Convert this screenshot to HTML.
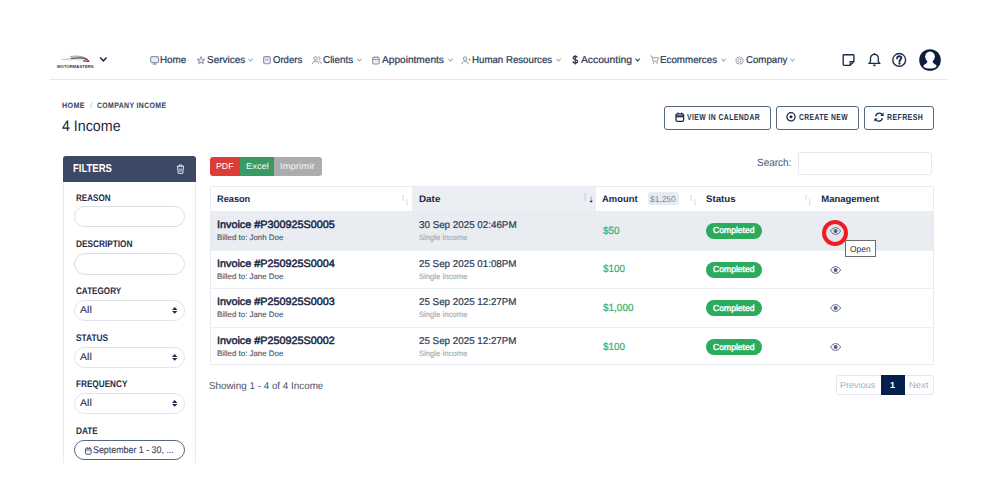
<!DOCTYPE html>
<html><head><meta charset="utf-8"><style>
html,body{margin:0;padding:0;background:#fff;}
body{width:1000px;height:500px;position:relative;overflow:hidden;font-family:"Liberation Sans",sans-serif;}
.t{position:absolute;white-space:nowrap;line-height:1;transform-origin:0 0;text-rendering:geometricPrecision;}
.r{position:absolute;}
svg.r{overflow:visible;}
</style></head><body>
<div class="r" style="left:50px;top:79px;width:898px;height:1px;background:#e6e9f0;"></div>
<svg class="r" style="left:56px;top:53px;width:40px;height:17px" viewBox="0 0 40 17">
<path d="M14.3 3.6 C17 3 22 2.9 26 3.8 C28.5 4.5 30.5 5.6 31.8 6.4" fill="none" stroke="#6a6a6a" stroke-width="0.7"/>
<path d="M5.9 6.4 C12 5.9 18 5.2 24 5.1 C27 5.1 30 6 31.8 6.9" fill="none" stroke="#9a9a9a" stroke-width="0.55"/>
<path d="M7.5 6.9 C15 6.6 24 6.7 31.5 7.4" fill="none" stroke="#b0b0b0" stroke-width="0.5"/>
<path d="M15 5.4 C19 4.9 24 4.8 27.5 5.2 C29.5 5.6 31.5 6.6 32.8 7.7" fill="none" stroke="#262626" stroke-width="1.0"/>
<path d="M27 7.3 C29.5 7.1 32 7.5 33.9 8.2 L33.2 8.9 C31 9 28.5 8.7 27 8.4 Z" fill="#e8282c"/>
<text x="1" y="15.1" font-family="Liberation Sans" font-weight="bold" font-size="4.4" fill="#3a3a3a" textLength="36.7" lengthAdjust="spacingAndGlyphs">MOTORMASTERS</text>
</svg>
<svg class="r" style="left:99.3px;top:56px;width:9px;height:7px" viewBox="0 0 9 7"><path d="M1.2 1.5 L4.4 4.8 L7.6 1.5" fill="none" stroke="#1c2a4a" stroke-width="1.5"/></svg>
<svg class="r" style="left:150.2px;top:56px;width:9.5px;height:9px" viewBox="0 0 9.5 9"><rect x="0.65" y="0.65" width="7.9" height="5.9" rx="1.2" fill="#e8ebf1" stroke="#8d97ab" stroke-width="1.2"/><path d="M2.8 8.1 H6.4 M4.6 6.6 V8.1" stroke="#8d97ab" stroke-width="1.2"/></svg>
<div class="t" style="left:160.28px;top:55.92px;font-size:10.0px;transform:scaleX(0.9781);-webkit-text-stroke:0.22px #2c3a57;color:#2c3a57;">Home</div>
<svg class="r" style="left:196.8px;top:55.8px;width:8px;height:9px" viewBox="0 0 8 9"><path d="M4 0.7 L5.1 3.1 L7.6 3.3 L5.7 5 L6.3 7.6 L4 6.2 L1.7 7.6 L2.3 5 L0.4 3.3 L2.9 3.1Z" fill="#e8ebf1" stroke="#8d97ab" stroke-width="1.05" stroke-linejoin="round"/></svg>
<div class="t" style="left:206.71px;top:55.64px;font-size:10.0px;transform:scaleX(0.9948);-webkit-text-stroke:0.22px #2c3a57;color:#2c3a57;">Services</div>
<svg class="r" style="left:248.1px;top:58.4px;width:5.5px;height:4.5px" viewBox="0 0 5.5 4.5"><path d="M0.5 0.7 L2.6 3.2 L4.7 0.7" fill="none" stroke="#a9b0bf" stroke-width="1.05"/></svg>
<svg class="r" style="left:263.1px;top:55.8px;width:8px;height:9px" viewBox="0 0 8 9"><rect x="0.6" y="0.6" width="6.7" height="7.1" rx="1.4" fill="#e8ebf1" stroke="#8d97ab" stroke-width="1.15"/><path d="M2.4 3.1 Q3.95 4.9 5.5 3.1" fill="none" stroke="#8d97ab" stroke-width="1"/></svg>
<div class="t" style="left:273.11px;top:55.67px;font-size:10.0px;transform:scaleX(0.9540);-webkit-text-stroke:0.22px #2c3a57;color:#2c3a57;">Orders</div>
<svg class="r" style="left:312px;top:55.9px;width:10px;height:8.5px" viewBox="0 0 10 8.5"><circle cx="3.6" cy="2.4" r="1.75" fill="#eef0f5" stroke="#8d97ab" stroke-width="1"/><path d="M6.2 0.8 A1.65 1.65 0 0 1 6.4 4.1" fill="none" stroke="#8d97ab" stroke-width="1"/><path d="M0.6 7.9 V7.3 C0.6 5.9 1.7 5.3 3 5.3 H4.2 C5.5 5.3 6.6 5.9 6.6 7.3 V7.9" fill="none" stroke="#8d97ab" stroke-width="1"/><path d="M7.3 5.4 C8.5 5.6 9.2 6.3 9.2 7.4 V7.9" fill="none" stroke="#8d97ab" stroke-width="1"/></svg>
<div class="t" style="left:323.23px;top:55.65px;font-size:10.0px;transform:scaleX(0.9881);-webkit-text-stroke:0.22px #2c3a57;color:#2c3a57;">Clients</div>
<svg class="r" style="left:356.6px;top:58.4px;width:5.5px;height:4.5px" viewBox="0 0 5.5 4.5"><path d="M0.5 0.7 L2.6 3.2 L4.7 0.7" fill="none" stroke="#a9b0bf" stroke-width="1.05"/></svg>
<svg class="r" style="left:371.8px;top:55.6px;width:8.5px;height:9px" viewBox="0 0 8.5 9"><rect x="0.6" y="1.3" width="6.6" height="6.6" rx="1.2" fill="#eef0f5" stroke="#8d97ab" stroke-width="1.05"/><path d="M0.6 3.6 H7.2 M2.3 0.2 V2.2 M5.5 0.2 V2.2" stroke="#8d97ab" stroke-width="1"/></svg>
<div class="t" style="left:381.63px;top:56.03px;font-size:10.0px;transform:scaleX(1.0125);-webkit-text-stroke:0.22px #2c3a57;color:#2c3a57;">Appointments</div>
<svg class="r" style="left:447.90000000000003px;top:58.4px;width:5.5px;height:4.5px" viewBox="0 0 5.5 4.5"><path d="M0.5 0.7 L2.6 3.2 L4.7 0.7" fill="none" stroke="#a9b0bf" stroke-width="1.05"/></svg>
<svg class="r" style="left:461px;top:55.5px;width:10px;height:9px" viewBox="0 0 10 9"><circle cx="4.1" cy="2.6" r="1.85" fill="#eef0f5" stroke="#8d97ab" stroke-width="1"/><path d="M1.1 8.3 V7.5 C1.1 6.2 2.1 5.6 3.3 5.6 H4.9 C6.1 5.6 7.1 6.2 7.1 7.5 V8.3" fill="none" stroke="#8d97ab" stroke-width="1"/><path d="M7.5 3.7 H9.7 M8.6 2.6 V4.8" stroke="#8d97ab" stroke-width="0.9"/></svg>
<div class="t" style="left:471.60px;top:55.76px;font-size:10.0px;transform:scaleX(0.9681);-webkit-text-stroke:0.22px #2c3a57;color:#2c3a57;">Human Resources</div>
<svg class="r" style="left:556.3000000000001px;top:58.4px;width:5.5px;height:4.5px" viewBox="0 0 5.5 4.5"><path d="M0.5 0.7 L2.6 3.2 L4.7 0.7" fill="none" stroke="#a9b0bf" stroke-width="1.05"/></svg>
<svg class="r" style="left:571.6px;top:55.1px;width:7px;height:10px" viewBox="0 0 7 10"><path d="M5.4 2.5 C5.1 1.7 4.3 1.3 3.3 1.3 C2.1 1.3 1.2 1.9 1.2 2.9 C1.2 4.9 5.6 4.4 5.6 6.3 C5.6 7.4 4.6 8 3.3 8 C2.1 8 1.1 7.5 0.9 6.5" fill="none" stroke="#2c3a57" stroke-width="1.4"/><path d="M3.3 0.4 V9.4" stroke="#2c3a57" stroke-width="1.2"/></svg>
<div class="t" style="left:580.90px;top:55.58px;font-size:10.0px;transform:scaleX(1.0279);-webkit-text-stroke:0.22px #2c3a57;color:#2c3a57;">Accounting</div>
<svg class="r" style="left:634.9px;top:58.4px;width:5.5px;height:4.5px" viewBox="0 0 5.5 4.5"><path d="M0.5 0.7 L2.6 3.2 L4.7 0.7" fill="none" stroke="#34425f" stroke-width="1.05"/></svg>
<svg class="r" style="left:649.6px;top:55px;width:9px;height:9.5px" viewBox="0 0 9 9.5"><path d="M0.3 1 H1.8 L3 6.2 H7.6 L8.3 2.6 H2.3" fill="none" stroke="#8d97ab" stroke-width="0.9" stroke-linejoin="round"/><circle cx="3.5" cy="8" r="0.8" fill="#8d97ab"/><circle cx="7" cy="8" r="0.8" fill="#8d97ab"/></svg>
<div class="t" style="left:660.45px;top:55.73px;font-size:10.0px;transform:scaleX(0.9778);-webkit-text-stroke:0.22px #2c3a57;color:#2c3a57;">Ecommerces</div>
<svg class="r" style="left:720.6px;top:58.4px;width:5.5px;height:4.5px" viewBox="0 0 5.5 4.5"><path d="M0.5 0.7 L2.6 3.2 L4.7 0.7" fill="none" stroke="#a9b0bf" stroke-width="1.05"/></svg>
<svg class="r" style="left:735px;top:55.5px;width:9px;height:9px" viewBox="0 0 9 9"><circle cx="4.5" cy="4.5" r="1.6" fill="none" stroke="#8d97ab" stroke-width="0.9"/><path d="M4.5 0.6 L5.4 1.6 L6.8 1.3 L7 2.7 L8.3 3.4 L7.6 4.6 L8.3 5.8 L7 6.4 L6.8 7.8 L5.4 7.4 L4.5 8.5 L3.6 7.4 L2.2 7.8 L2 6.4 L0.7 5.8 L1.4 4.6 L0.7 3.4 L2 2.7 L2.2 1.3 L3.6 1.6Z" fill="none" stroke="#8d97ab" stroke-width="0.9" stroke-linejoin="round"/></svg>
<div class="t" style="left:745.95px;top:56.06px;font-size:10.0px;transform:scaleX(0.9659);-webkit-text-stroke:0.22px #2c3a57;color:#2c3a57;">Company</div>
<svg class="r" style="left:790.3000000000001px;top:58.4px;width:5.5px;height:4.5px" viewBox="0 0 5.5 4.5"><path d="M0.5 0.7 L2.6 3.2 L4.7 0.7" fill="none" stroke="#a9b0bf" stroke-width="1.05"/></svg>
<svg class="r" style="left:842.2px;top:53.8px;width:13px;height:12.5px" viewBox="0 0 13 12.5"><path d="M2 0.7 H11.1 Q11.9 0.7 11.9 1.5 V7.4 L7.8 11.4 H2 Q1.2 11.4 1.2 10.6 V1.5 Q1.2 0.7 2 0.7Z" fill="none" stroke="#1d2c4c" stroke-width="1.35" stroke-linejoin="round"/><path d="M11.9 7.6 H8.2 V11.3" fill="none" stroke="#1d2c4c" stroke-width="1.2"/></svg>
<svg class="r" style="left:868.2px;top:52.9px;width:13px;height:14px" viewBox="0 0 13 14"><path d="M6.4 1.3 C4 1.3 2.5 3.2 2.5 5.6 V8.6 L0.9 10.4 H11.9 L10.3 8.6 V5.6 C10.3 3.2 8.8 1.3 6.4 1.3Z" fill="none" stroke="#1d2c4c" stroke-width="1.3" stroke-linejoin="round"/><path d="M6.4 0 V1.4" stroke="#1d2c4c" stroke-width="1.4"/><path d="M5.2 12 Q6.4 13.8 7.6 12Z" fill="#1d2c4c" stroke="#1d2c4c" stroke-width="0.8"/></svg>
<svg class="r" style="left:891.8px;top:52.8px;width:14.4px;height:14px" viewBox="0 0 14.4 14"><circle cx="7.2" cy="6.9" r="6.4" fill="none" stroke="#1d2c4c" stroke-width="1.4"/><path d="M5.1 5.4 C5.1 4 6.1 3.3 7.2 3.3 C8.4 3.3 9.3 4 9.3 5.1 C9.3 6.4 7.5 6.6 7.5 8.4" fill="none" stroke="#1d2c4c" stroke-width="1.9" stroke-linecap="round"/><circle cx="7.5" cy="10.5" r="1.15" fill="#1d2c4c"/></svg>
<svg class="r" style="left:919.2px;top:48.9px;width:22px;height:22px" viewBox="0 0 22 22"><defs><clipPath id="avc"><circle cx="11" cy="11" r="10.8"/></clipPath></defs><circle cx="11" cy="11" r="10.8" fill="#0d1d3b"/><g clip-path="url(#avc)" fill="#fff"><ellipse cx="11" cy="7.6" rx="4.9" ry="5.2"/><path d="M8.3 11.5 C8.6 13.6 7.4 14.6 5.6 15.6 C4.4 16.2 4.2 17.3 4.8 18 C6.3 19.3 8.6 19.6 11 19.6 C13.4 19.6 15.7 19.3 17.2 18 C17.8 17.3 17.6 16.2 16.4 15.6 C14.6 14.6 13.4 13.6 13.7 11.5Z"/></g></svg>
<div class="t" style="left:61.52px;top:102.31px;font-size:7.9px;font-weight:bold;transform:scaleX(0.9041);letter-spacing:0.4px;color:#34415c;">HOME</div>
<div class="t" style="left:90.01px;top:100.97px;font-size:8.3px;transform:scaleX(1.0757);color:#b9c0cd;">/</div>
<div class="t" style="left:97.13px;top:102.31px;font-size:7.9px;font-weight:bold;transform:scaleX(0.8796);letter-spacing:0.4px;color:#34415c;">COMPANY INCOME</div>
<div class="t" style="left:62.23px;top:118.91px;font-size:15.2px;transform:scaleX(0.9372);color:#1a2844;">4 Income</div>
<div class="r" style="left:663.8px;top:106px;width:106.8px;height:23.5px;box-sizing:border-box;border:1.3px solid #56667f;border-radius:3px;background:#fff;"></div>
<svg class="r" style="left:674.5px;top:112.3px;width:10px;height:10px" viewBox="0 0 10 10"><rect x="1" y="1.8" width="7.6" height="7.5" rx="1.3" fill="none" stroke="#1d2c4c" stroke-width="1.3"/><path d="M1 4.3 H8.6" stroke="#1d2c4c" stroke-width="2"/><path d="M3 0.4 V2.6 M6.6 0.4 V2.6" stroke="#1d2c4c" stroke-width="1.2"/></svg>
<div class="t" style="left:686.92px;top:112.72px;font-size:8.6px;font-weight:bold;transform:scaleX(0.7922);letter-spacing:0.55px;color:#24324f;">VIEW IN CALENDAR</div>
<div class="r" style="left:775.6px;top:106px;width:83px;height:23.5px;box-sizing:border-box;border:1.3px solid #56667f;border-radius:3px;background:#fff;"></div>
<svg class="r" style="left:786.2px;top:112.3px;width:10px;height:10px" viewBox="0 0 10 10"><circle cx="5" cy="4.8" r="4.1" fill="none" stroke="#1d2c4c" stroke-width="1.3"/><circle cx="5" cy="4.8" r="1.5" fill="#1d2c4c"/></svg>
<div class="t" style="left:799.07px;top:112.72px;font-size:8.6px;font-weight:bold;transform:scaleX(0.7816);letter-spacing:0.55px;color:#24324f;">CREATE NEW</div>
<div class="r" style="left:863.8px;top:106px;width:70px;height:23.5px;box-sizing:border-box;border:1.3px solid #56667f;border-radius:3px;background:#fff;"></div>
<svg class="r" style="left:874.2px;top:112.3px;width:10px;height:10px" viewBox="0 0 10 10"><path d="M1.6 4.2 C2.2 2.2 3.8 1.2 5.4 1.2 C7 1.2 8.2 2 8.8 3.2 M8.4 6.2 C7.8 8.2 6.4 9.2 4.6 9.2 C3 9.2 1.8 8.4 1.2 7.2" fill="none" stroke="#1d2c4c" stroke-width="1.3"/><path d="M9.6 0.6 V4 H6.2 Z M0.4 9.8 V6.4 H3.8 Z" fill="#1d2c4c"/></svg>
<div class="t" style="left:887.06px;top:112.72px;font-size:8.6px;font-weight:bold;transform:scaleX(0.8045);letter-spacing:0.55px;color:#24324f;">REFRESH</div>
<div class="r" style="left:63px;top:156px;width:133px;height:320px;box-sizing:border-box;border:1px solid #e7eaf0;border-radius:3px;background:#fff;"></div>
<div class="r" style="left:63px;top:156px;width:133px;height:26px;background:#3c4966;border-radius:3px 3px 0 0;"></div>
<div class="t" style="left:72.55px;top:164.22px;font-size:11.5px;font-weight:bold;transform:scaleX(0.8267);color:#fff;">FILTERS</div>
<svg class="r" style="left:176px;top:164.3px;width:9px;height:10px" viewBox="0 0 9 10"><path d="M0.8 2.3 H8.2 M3 2.3 V1 H6 V2.3" fill="none" stroke="#e4e7ee" stroke-width="1"/><path d="M1.6 2.8 L2.2 9.3 H6.8 L7.4 2.8" fill="none" stroke="#e4e7ee" stroke-width="1"/><path d="M3.8 4.5 V7.6 M5.2 4.5 V7.6" stroke="#e4e7ee" stroke-width="0.9"/></svg>
<div class="t" style="left:76.46px;top:193.87px;font-size:9.6px;font-weight:bold;transform:scaleX(0.8414);color:#1f2c47;">REASON</div>
<div class="r" style="left:74px;top:205.8px;width:111px;height:21.5px;box-sizing:border-box;border:1px solid #d9dfe8;border-radius:11px;background:#fff;"></div>
<div class="t" style="left:76.44px;top:239.87px;font-size:9.6px;font-weight:bold;transform:scaleX(0.8618);color:#1f2c47;">DESCRIPTION</div>
<div class="r" style="left:74px;top:253px;width:111px;height:21.5px;box-sizing:border-box;border:1px solid #d9dfe8;border-radius:11px;background:#fff;"></div>
<div class="t" style="left:75.70px;top:286.87px;font-size:9.6px;font-weight:bold;transform:scaleX(0.8465);color:#1f2c47;">CATEGORY</div>
<div class="r" style="left:74px;top:300.2px;width:111px;height:21.3px;box-sizing:border-box;border:1px solid #dfe4ec;border-radius:11px;background:#fff;"></div>
<div class="t" style="left:80.29px;top:305.56px;font-size:9.8px;transform:scaleX(1.0801);-webkit-text-stroke:0.15px #2f3b52;color:#2f3b52;">All</div>
<svg class="r" style="left:172px;top:307.09999999999997px;width:6px;height:8px" viewBox="0 0 6 8"><path d="M0 3 L2.7 0 L5.4 3Z M0 4.1 L2.7 6.8 L5.4 4.1Z" fill="#1f2c47"/></svg>
<div class="t" style="left:76.21px;top:333.87px;font-size:9.6px;font-weight:bold;transform:scaleX(0.8712);color:#1f2c47;">STATUS</div>
<div class="r" style="left:74px;top:346.8px;width:111px;height:21.3px;box-sizing:border-box;border:1px solid #dfe4ec;border-radius:11px;background:#fff;"></div>
<div class="t" style="left:80.29px;top:352.94px;font-size:9.8px;transform:scaleX(1.0801);-webkit-text-stroke:0.15px #2f3b52;color:#2f3b52;">All</div>
<svg class="r" style="left:172px;top:353.7px;width:6px;height:8px" viewBox="0 0 6 8"><path d="M0 3 L2.7 0 L5.4 3Z M0 4.1 L2.7 6.8 L5.4 4.1Z" fill="#1f2c47"/></svg>
<div class="t" style="left:76.45px;top:380.30px;font-size:9.6px;font-weight:bold;transform:scaleX(0.8531);color:#1f2c47;">FREQUENCY</div>
<div class="r" style="left:74px;top:393.2px;width:111px;height:21.3px;box-sizing:border-box;border:1px solid #dfe4ec;border-radius:11px;background:#fff;"></div>
<div class="t" style="left:80.29px;top:398.56px;font-size:9.8px;transform:scaleX(1.0801);-webkit-text-stroke:0.15px #2f3b52;color:#2f3b52;">All</div>
<svg class="r" style="left:172px;top:400.09999999999997px;width:6px;height:8px" viewBox="0 0 6 8"><path d="M0 3 L2.7 0 L5.4 3Z M0 4.1 L2.7 6.8 L5.4 4.1Z" fill="#1f2c47"/></svg>
<div class="t" style="left:76.45px;top:426.87px;font-size:9.6px;font-weight:bold;transform:scaleX(0.8595);color:#1f2c47;">DATE</div>
<div class="r" style="left:74px;top:439.7px;width:111px;height:20.6px;box-sizing:border-box;border:1.2px solid #58667f;border-radius:11px;background:#fff;"></div>
<svg class="r" style="left:84.5px;top:446.7px;width:7px;height:8px" viewBox="0 0 7 8"><rect x="0.5" y="1.3" width="5.6" height="5.9" rx="1" fill="none" stroke="#46546f" stroke-width="1"/><path d="M0.5 3.1 H6.1" stroke="#46546f" stroke-width="0.9"/><path d="M2 0.1 V1.8 M4.6 0.1 V1.8" stroke="#46546f" stroke-width="0.95"/></svg>
<div class="t" style="left:93.28px;top:446.13px;font-size:9.6px;transform:scaleX(0.9236);-webkit-text-stroke:0.1px #34415c;color:#34415c;">September 1 - 30, ...</div>
<div class="r" style="left:55px;top:463px;width:150px;height:40px;background:#fff;"></div>
<div class="r" style="left:210px;top:157px;width:29.5px;height:18.5px;background:#dc3e37;border-radius:3px 0 0 3px;"></div>
<div class="r" style="left:239.5px;top:157px;width:34.5px;height:18.5px;background:#3a9a63;"></div>
<div class="r" style="left:274px;top:157px;width:48px;height:18.5px;background:#acacac;border-radius:0 3px 3px 0;"></div>
<div class="t" style="left:215.70px;top:161.64px;font-size:8.7px;transform:scaleX(1.0047);color:#fff;">PDF</div>
<div class="t" style="left:246.36px;top:161.64px;font-size:8.7px;transform:scaleX(1.0763);color:#f4fff8;">Excel</div>
<div class="t" style="left:279.72px;top:161.66px;font-size:8.7px;transform:scaleX(1.1069);color:#f6f6f6;">Imprimir</div>
<div class="t" style="left:756.71px;top:158.31px;font-size:10.5px;transform:scaleX(0.9504);color:#4a566e;">Search:</div>
<div class="r" style="left:797.5px;top:151.7px;width:134.5px;height:23.7px;box-sizing:border-box;border:1px solid #e4e7ee;border-radius:3px;background:#fff;"></div>
<div class="r" style="left:210px;top:186px;width:724px;height:179.4px;box-sizing:border-box;border:1px solid #e8ebf0;background:#fff;"></div>
<div class="r" style="left:412px;top:187px;width:184.2px;height:24px;background:#ebeef3;"></div>
<div class="r" style="left:211px;top:211px;width:722px;height:39.4px;background:#e9ecf1;"></div>
<div class="r" style="left:211px;top:249.6px;width:722px;height:1px;background:#eceef3;"></div>
<div class="r" style="left:211px;top:288.1px;width:722px;height:1px;background:#eceef3;"></div>
<div class="r" style="left:211px;top:326.7px;width:722px;height:1px;background:#eceef3;"></div>
<div class="r" style="left:211px;top:210.5px;width:722px;height:1px;background:#e8ebf0;"></div>
<div class="t" style="left:217.01px;top:194.96px;font-size:9.5px;font-weight:bold;transform:scaleX(0.9684);color:#1b2946;">Reason</div>
<svg class="r" style="left:401.1px;top:194px;width:8px;height:12px" viewBox="0 0 8 12"><path d="M0.8 2.4 L2 0.8 L3.2 2.4Z M4.6 9.8 L5.8 11.2 L7 9.8Z" fill="#cfd4dd"/><path d="M2 2.2 V6.8 M5.8 4.8 V10" stroke="#cfd4dd" stroke-width="0.8"/></svg>
<div class="t" style="left:418.88px;top:194.96px;font-size:9.5px;font-weight:bold;transform:scaleX(1.0385);color:#1b2946;">Date</div>
<svg class="r" style="left:582.8px;top:192px;width:11px;height:12px" viewBox="0 0 11 12"><path d="M0.5 2.6 L2 0.8 L3.5 2.6Z" fill="#c5ccd8"/><path d="M2 2.4 V8.8" stroke="#c5ccd8" stroke-width="0.9"/><path d="M8.2 4.6 V8.9" stroke="#9eafcf" stroke-width="1.1"/><path d="M6.5 8.7 L8.2 10.8 L9.9 8.7Z" fill="#1b2946"/></svg>
<div class="t" style="left:602.40px;top:194.96px;font-size:9.5px;font-weight:bold;transform:scaleX(0.9896);color:#1b2946;">Amount</div>
<div class="r" style="left:647.8px;top:192px;width:31.2px;height:13px;background:#e7ebf3;border-radius:2.5px;"></div>
<div class="t" style="left:649.71px;top:194.79px;font-size:8.5px;transform:scaleX(0.9878);color:#7c879c;">$1,250</div>
<svg class="r" style="left:688.6px;top:194px;width:8px;height:12px" viewBox="0 0 8 12"><path d="M0.8 2.4 L2 0.8 L3.2 2.4Z M4.6 9.8 L5.8 11.2 L7 9.8Z" fill="#cfd4dd"/><path d="M2 2.2 V6.8 M5.8 4.8 V10" stroke="#cfd4dd" stroke-width="0.8"/></svg>
<div class="t" style="left:705.65px;top:194.96px;font-size:9.5px;font-weight:bold;transform:scaleX(1.0179);color:#1b2946;">Status</div>
<svg class="r" style="left:803.6px;top:194px;width:8px;height:12px" viewBox="0 0 8 12"><path d="M0.8 2.4 L2 0.8 L3.2 2.4Z M4.6 9.8 L5.8 11.2 L7 9.8Z" fill="#cfd4dd"/><path d="M2 2.2 V6.8 M5.8 4.8 V10" stroke="#cfd4dd" stroke-width="0.8"/></svg>
<div class="t" style="left:821.22px;top:194.55px;font-size:9.5px;font-weight:bold;color:#1b2946;">Management</div>
<div class="t" style="left:216.69px;top:220.19px;font-size:10.6px;transform:scaleX(1.0209);-webkit-text-stroke:0.5px #1b2946;color:#1b2946;">Invoice #P300925S0005</div>
<div class="t" style="left:217.07px;top:234.16px;font-size:7.9px;-webkit-text-stroke:0.12px #4a566e;color:#4a566e;">Billed to: Jonh Doe</div>
<div class="t" style="left:418.61px;top:221.18px;font-size:9.9px;transform:scaleX(0.9928);-webkit-text-stroke:0.22px #2f3c56;color:#2f3c56;">30 Sep 2025 02:46PM</div>
<div class="t" style="left:419.35px;top:234.17px;font-size:7.9px;transform:scaleX(0.9714);-webkit-text-stroke:0.2px #a7afc0;color:#a7afc0;">Single income</div>
<div class="t" style="left:602.76px;top:227.37px;font-size:10.4px;transform:scaleX(0.9494);-webkit-text-stroke:0.2px #36b068;color:#36b068;">$50</div>
<div class="r" style="left:706.2px;top:222.9px;width:56.1px;height:16.3px;background:#2aab5e;border-radius:8.2px;"></div>
<div class="t" style="left:713.23px;top:226.11px;font-size:8.7px;transform:scaleX(0.9884);-webkit-text-stroke:0.4px #fff;color:#fff;">Completed</div>
<svg class="r" style="left:829.8px;top:226.8px;width:11.2px;height:8px" viewBox="0 0 11.2 8"><path d="M0.6 4 C2 1.5 4 0.6 5.6 0.6 C7.2 0.6 9.2 1.5 10.6 4 C9.2 6.5 7.2 7.4 5.6 7.4 C4 7.4 2 6.5 0.6 4Z" fill="none" stroke="#53607c" stroke-width="0.95"/><circle cx="5.6" cy="4" r="2" fill="#53607c"/></svg>
<div class="t" style="left:216.65px;top:258.84px;font-size:10.6px;transform:scaleX(1.0211);-webkit-text-stroke:0.5px #1b2946;color:#1b2946;">Invoice #P250925S0004</div>
<div class="t" style="left:217.07px;top:273.06px;font-size:7.9px;-webkit-text-stroke:0.12px #4a566e;color:#4a566e;">Billed to: Jane Doe</div>
<div class="t" style="left:418.75px;top:260.21px;font-size:9.9px;transform:scaleX(0.9923);-webkit-text-stroke:0.22px #2f3c56;color:#2f3c56;">25 Sep 2025 01:08PM</div>
<div class="t" style="left:419.35px;top:272.83px;font-size:7.9px;transform:scaleX(0.9714);-webkit-text-stroke:0.2px #a7afc0;color:#a7afc0;">Single income</div>
<div class="t" style="left:602.77px;top:265.24px;font-size:10.4px;transform:scaleX(0.9540);-webkit-text-stroke:0.2px #36b068;color:#36b068;">$100</div>
<div class="r" style="left:706.2px;top:261.59999999999997px;width:56.1px;height:16.3px;background:#2aab5e;border-radius:8.2px;"></div>
<div class="t" style="left:713.23px;top:265.15px;font-size:8.7px;transform:scaleX(0.9884);-webkit-text-stroke:0.4px #fff;color:#fff;">Completed</div>
<svg class="r" style="left:829.8px;top:265.5px;width:11.2px;height:8px" viewBox="0 0 11.2 8"><path d="M0.6 4 C2 1.5 4 0.6 5.6 0.6 C7.2 0.6 9.2 1.5 10.6 4 C9.2 6.5 7.2 7.4 5.6 7.4 C4 7.4 2 6.5 0.6 4Z" fill="none" stroke="#53607c" stroke-width="0.95"/><circle cx="5.6" cy="4" r="2" fill="#53607c"/></svg>
<div class="t" style="left:217.34px;top:297.31px;font-size:10.6px;transform:scaleX(1.0199);-webkit-text-stroke:0.5px #1b2946;color:#1b2946;">Invoice #P250925S0003</div>
<div class="t" style="left:217.07px;top:311.04px;font-size:7.9px;-webkit-text-stroke:0.12px #4a566e;color:#4a566e;">Billed to: Jane Doe</div>
<div class="t" style="left:418.75px;top:298.45px;font-size:9.9px;transform:scaleX(0.9923);-webkit-text-stroke:0.22px #2f3c56;color:#2f3c56;">25 Sep 2025 12:27PM</div>
<div class="t" style="left:419.35px;top:311.41px;font-size:7.9px;transform:scaleX(0.9714);-webkit-text-stroke:0.2px #a7afc0;color:#a7afc0;">Single income</div>
<div class="t" style="left:602.75px;top:304.41px;font-size:10.4px;transform:scaleX(0.9581);-webkit-text-stroke:0.2px #36b068;color:#36b068;">$1,000</div>
<div class="r" style="left:706.2px;top:300.2px;width:56.1px;height:16.3px;background:#2aab5e;border-radius:8.2px;"></div>
<div class="t" style="left:713.23px;top:304.45px;font-size:8.7px;transform:scaleX(0.9884);-webkit-text-stroke:0.4px #fff;color:#fff;">Completed</div>
<svg class="r" style="left:829.8px;top:304.1px;width:11.2px;height:8px" viewBox="0 0 11.2 8"><path d="M0.6 4 C2 1.5 4 0.6 5.6 0.6 C7.2 0.6 9.2 1.5 10.6 4 C9.2 6.5 7.2 7.4 5.6 7.4 C4 7.4 2 6.5 0.6 4Z" fill="none" stroke="#53607c" stroke-width="0.95"/><circle cx="5.6" cy="4" r="2" fill="#53607c"/></svg>
<div class="t" style="left:216.53px;top:335.58px;font-size:10.6px;transform:scaleX(1.0203);-webkit-text-stroke:0.5px #1b2946;color:#1b2946;">Invoice #P250925S0002</div>
<div class="t" style="left:217.07px;top:350.42px;font-size:7.9px;-webkit-text-stroke:0.12px #4a566e;color:#4a566e;">Billed to: Jane Doe</div>
<div class="t" style="left:418.75px;top:336.53px;font-size:9.9px;transform:scaleX(0.9923);-webkit-text-stroke:0.22px #2f3c56;color:#2f3c56;">25 Sep 2025 12:27PM</div>
<div class="t" style="left:419.35px;top:349.64px;font-size:7.9px;transform:scaleX(0.9714);-webkit-text-stroke:0.2px #a7afc0;color:#a7afc0;">Single income</div>
<div class="t" style="left:602.77px;top:342.70px;font-size:10.4px;transform:scaleX(0.9540);-webkit-text-stroke:0.2px #36b068;color:#36b068;">$100</div>
<div class="r" style="left:706.2px;top:338.79999999999995px;width:56.1px;height:16.3px;background:#2aab5e;border-radius:8.2px;"></div>
<div class="t" style="left:713.23px;top:342.51px;font-size:8.7px;transform:scaleX(0.9884);-webkit-text-stroke:0.4px #fff;color:#fff;">Completed</div>
<svg class="r" style="left:829.8px;top:342.7px;width:11.2px;height:8px" viewBox="0 0 11.2 8"><path d="M0.6 4 C2 1.5 4 0.6 5.6 0.6 C7.2 0.6 9.2 1.5 10.6 4 C9.2 6.5 7.2 7.4 5.6 7.4 C4 7.4 2 6.5 0.6 4Z" fill="none" stroke="#53607c" stroke-width="0.95"/><circle cx="5.6" cy="4" r="2" fill="#53607c"/></svg>
<svg class="r" style="left:822.2px;top:219.6px;width:26px;height:26px" viewBox="0 0 26 26"><circle cx="13" cy="13" r="9" fill="#e2e5eb"/><circle cx="13" cy="13" r="11" fill="none" stroke="#ee1c25" stroke-width="4"/></svg>
<svg class="r" style="left:829.8px;top:227.2px;width:11.2px;height:8px" viewBox="0 0 11.2 8"><path d="M0.6 4 C2 1.5 4 0.6 5.6 0.6 C7.2 0.6 9.2 1.5 10.6 4 C9.2 6.5 7.2 7.4 5.6 7.4 C4 7.4 2 6.5 0.6 4Z" fill="none" stroke="#53607c" stroke-width="0.95"/><circle cx="5.6" cy="4" r="2" fill="#53607c"/></svg>
<div class="r" style="left:845px;top:240.3px;width:30.8px;height:17.1px;box-sizing:border-box;border:1px solid #6b6b6b;background:#fff;"></div>
<div class="t" style="left:850.08px;top:245.41px;font-size:8.7px;transform:scaleX(0.9677);color:#333;">Open</div>
<div class="t" style="left:208.52px;top:382.40px;font-size:10px;transform:scaleX(0.9838);color:#46526b;">Showing 1 - 4 of 4 Income</div>
<div class="r" style="left:835.7px;top:375.2px;width:98.2px;height:19.4px;box-sizing:border-box;border:1px solid #e3e7ee;border-radius:3px;background:#fff;"></div>
<div class="r" style="left:880.8px;top:375.2px;width:24.2px;height:19.4px;background:#05204c;"></div>
<div class="t" style="left:839.65px;top:381.25px;font-size:8.8px;transform:scaleX(1.0307);color:#a6aec0;">Previous</div>
<div class="t" style="left:890.17px;top:381.25px;font-size:8.8px;font-weight:bold;transform:scaleX(1.0251);color:#fff;">1</div>
<div class="t" style="left:908.51px;top:381.25px;font-size:8.8px;transform:scaleX(1.0660);color:#a6aec0;">Next</div>
</body></html>
